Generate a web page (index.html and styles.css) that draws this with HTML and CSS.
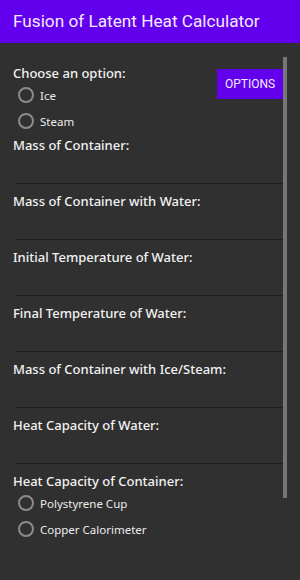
FILE: index.html
```html
<!DOCTYPE html>
<html lang="en">
<head>
    <meta charset="UTF-8">
    <meta name="viewport" content="width=device-width, initial-scale=1.0">
    <title>Fusion of Latent Heat Calculator</title>
    <link rel="stylesheet" href="styles.css">
</head>
<body>
    <div class="app">
        <div class="app-bar">Fusion of Latent Heat Calculator</div>
        <div class="content">
            <div class="choose-row">
                <div class="choose-group">
                    <div class="label">Choose an option:</div>
                    <label class="radio"><span class="radio-circle"></span>Ice</label>
                    <label class="radio"><span class="radio-circle"></span>Steam</label>
                </div>
                <button class="options-button">OPTIONS</button>
            </div>

            <div class="field">
                <div class="label">Mass of Container:</div>
                <div class="input"></div>
            </div>
            <div class="field">
                <div class="label">Mass of Container with Water:</div>
                <div class="input"></div>
            </div>
            <div class="field">
                <div class="label">Initial Temperature of Water:</div>
                <div class="input"></div>
            </div>
            <div class="field">
                <div class="label">Final Temperature of Water:</div>
                <div class="input"></div>
            </div>
            <div class="field">
                <div class="label">Mass of Container with Ice/Steam:</div>
                <div class="input"></div>
            </div>
            <div class="field">
                <div class="label">Heat Capacity of Water:</div>
                <div class="input"></div>
            </div>
            <div class="field">
                <div class="label">Heat Capacity of Container:</div>
                <label class="radio"><span class="radio-circle"></span>Polystyrene Cup</label>
                <label class="radio"><span class="radio-circle"></span>Copper Calorimeter</label>
            </div>

            <div class="scrollbar"></div>
        </div>
    </div>
</body>
</html>
```

FILE: styles.css
```css
body{
    margin: 0;
    background-color: #303030;
    font-family: "Noto Sans", sans-serif;
}
.app{
    width: 300px;
    height: 580px;
    overflow: hidden;
}
.app-bar{
    height: 43px;
    background-color: #6200ee;
    color: #f3eaff;
    font-family: Roboto, sans-serif;
    font-size: 17.2px;
    line-height: 43px;
    padding-left: 13px;
}
.content{
    position: relative;
    padding: 21px 17px 0 13px;
}

/***************** -choose- *******************/

.choose-row{
    display: flex;
    justify-content: space-between;
    align-items: flex-start;
}
.options-button{
    margin-top: 5px;
    width: 66px;
    height: 30px;
    border: none;
    background-color: #6200ee;
    color: #f3eaff;
    font-family: Roboto, sans-serif;
    font-size: 12px;
    padding: 0;
}

/***************** -fields- *******************/

.label{
    color: #f2f2f2;
    font-size: 13px;
    font-weight: 500;
    line-height: 18px;
}
.field{
    margin-top: 2px;
}
.field + .field{
    margin-top: 8px;
}
.input{
    height: 29px;
    margin-left: 3px;
    border-bottom: 1px solid #1f1f1f;
}
.radio{
    display: flex;
    align-items: center;
    height: 26px;
    padding-left: 5px;
    color: #ececec;
    font-size: 11.5px;
}
.radio-circle{
    width: 12px;
    height: 12px;
    border: 2px solid #8c8c8c;
    border-radius: 50%;
    margin-right: 6px;
}
.scrollbar{
    position: absolute;
    left: 283px;
    top: 14px;
    width: 4px;
    height: 441px;
    background-color: #767676;
}
```
